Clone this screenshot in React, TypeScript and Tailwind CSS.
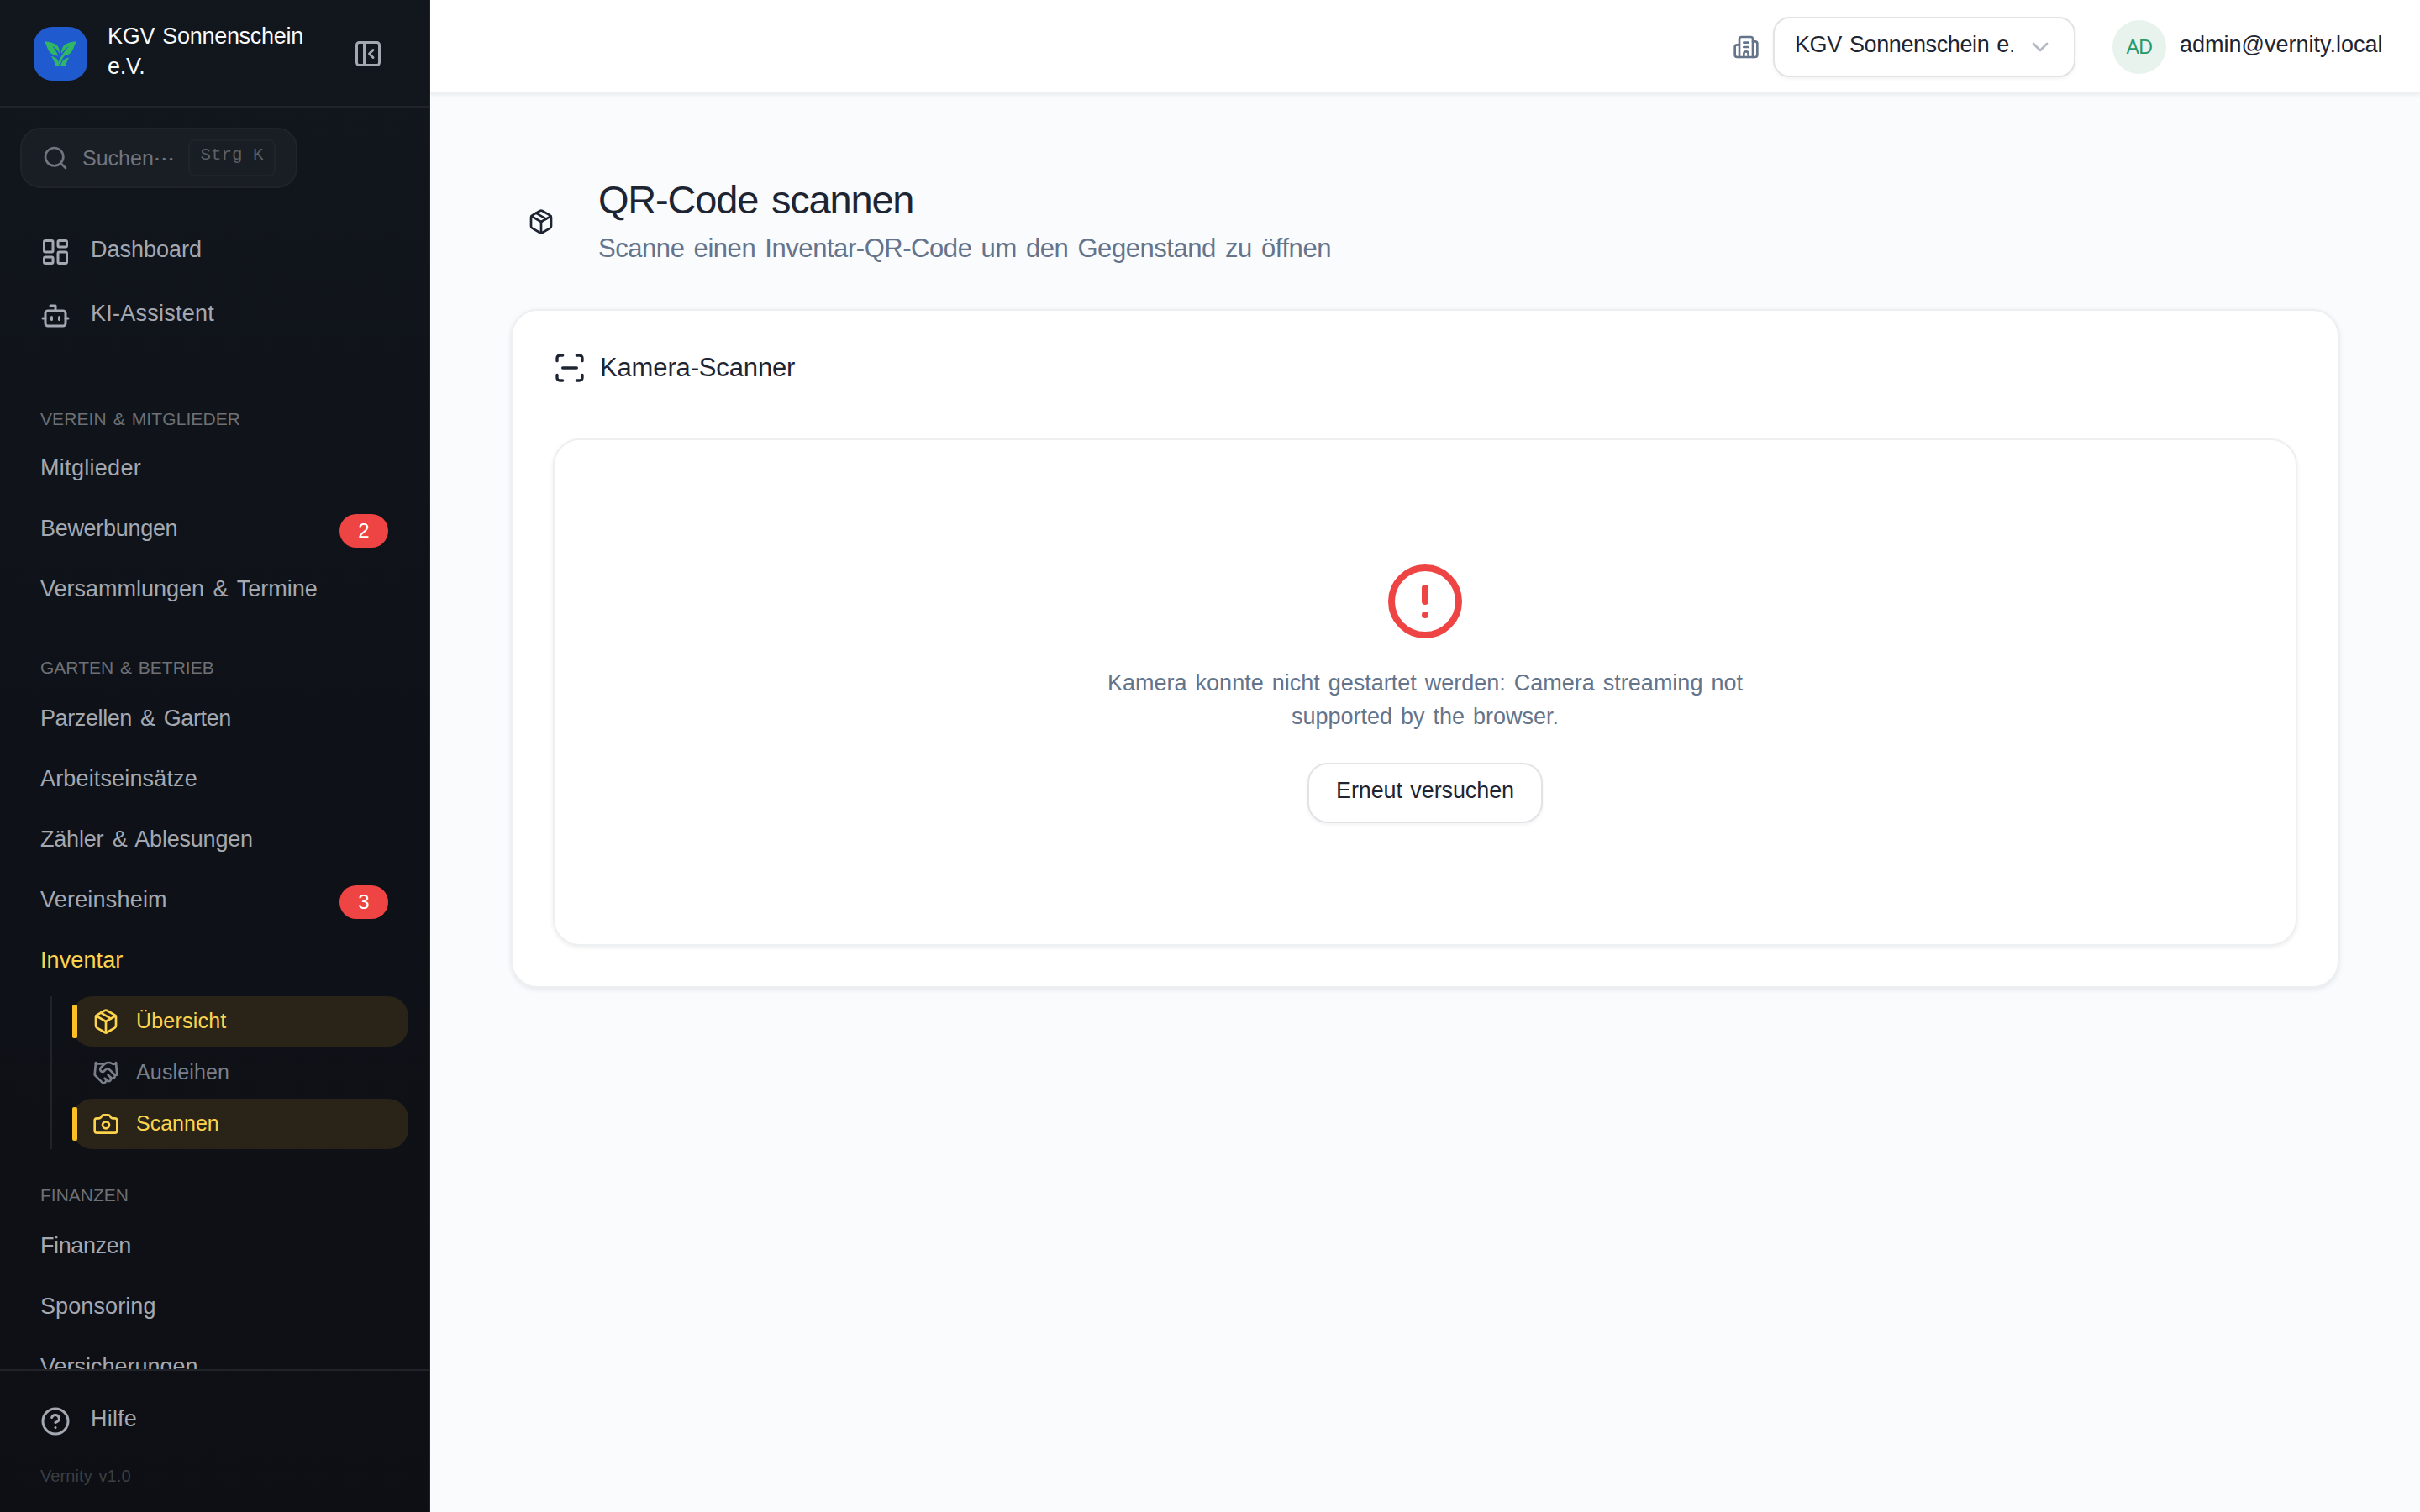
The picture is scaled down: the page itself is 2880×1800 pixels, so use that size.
import React from "react";
import {
  Bot,
  Building2,
  Camera,
  ChevronDown,
  CircleAlert,
  CircleHelp,
  Handshake,
  LayoutDashboard,
  Package,
  PanelLeftClose,
  Search,
} from "lucide-react";

type Item = { label: string; tracking?: string; badge?: string; active?: boolean };

function Logo() {
  return (
    <div className="size-16 shrink-0 rounded-[22px] bg-[#1f5bcf]">
      <svg viewBox="0 0 64 64" className="size-16" fill="#2fb765">
        <path d="M12.7 17.2C18.5 17.6 25 18.8 28.4 22.6C30.6 25.2 31 28.6 30.8 32.4C29.4 29 27 25.4 22.6 22.6C25 26.6 27.4 30.2 29.4 34.6C24.4 33.8 19.6 32 17.4 27.4C16 24.2 14.8 20.4 12.7 17.2Z" />
        <path d="M51.3 17.2C45 17.8 39.2 18.8 35.8 22.6C33.2 25.6 33 28.8 33.2 32C35.4 28.6 38 25.4 41.8 22.8C38 28 33.4 33.4 30.6 39.6L29.4 42.2L31.2 46.8C32 42.6 34 38 36.6 34.6C41 33.8 44.8 31.4 46.8 27C48.2 23.6 49.2 20.2 51.3 17.2Z" />
        <path d="M21 35C24.4 35.6 27 37 28.6 39.2C29.8 41.4 30.2 44 30.2 46.8H26.6C25.2 42.6 23.4 38.4 21 35Z" />
        <path d="M42.4 36.4C39 37 36.2 38.4 34.6 40.4C33.2 42.4 32.6 44.6 32.2 46.8H37.8C38.8 43 40.4 39.4 42.4 36.4Z" />
      </svg>
    </div>
  );
}

function NavRow({ label, tracking = "", badge, active }: Item) {
  return (
    <div className="flex h-[72px] shrink-0 items-center justify-between pr-[48px] pl-[48px]">
      <span
        className={`pb-[7px] text-[27px] leading-[36px] [word-spacing:3px] ${tracking} ${
          active ? "text-[#fcd34d]" : "text-[#a4a8b1]"
        }`}
      >
        {label}
      </span>
      {badge && (
        <span className="flex h-10 w-[58px] items-center justify-center rounded-full bg-[#ef4444] pb-px text-[24px] leading-none text-white">
          {badge}
        </span>
      )}
    </div>
  );
}

function SectionTitle({ children, className }: { children: string; className: string }) {
  return (
    <div className={`flex shrink-0 items-end pl-[48px] text-[21px] leading-[30px] text-[#6d7075] [word-spacing:2px] ${className}`}>
      {children}
    </div>
  );
}

function SubItem({
  icon: Icon,
  label,
  active,
  tracking = "",
}: {
  icon: React.ComponentType<{ className?: string; strokeWidth?: number }>;
  label: string;
  active?: boolean;
  tracking?: string;
}) {
  return (
    <div
      className={`relative flex h-[60px] items-center rounded-[24px] pl-[24px] ${
        active ? "bg-[#2a2318] text-[#fcd34d]" : "text-[#7a7f89]"
      }`}
    >
      {active && <span className="absolute top-[10px] left-0 h-10 w-1.5 rounded-[2px] bg-[#fbbf24]" />}
      <Icon className="size-8" strokeWidth={2} />
      <span className={`ml-[20px] pb-[2px] text-[25px] leading-[36px] ${tracking}`}>{label}</span>
    </div>
  );
}

const club: Item[] = [
  { label: "Mitglieder", tracking: "tracking-[0.3px]" },
  { label: "Bewerbungen", tracking: "tracking-[-0.3px]", badge: "2" },
  { label: "Versammlungen & Termine" },
];
const garden: Item[] = [
  { label: "Parzellen & Garten", tracking: "tracking-[-0.4px]" },
  { label: "Arbeitseinsätze", tracking: "tracking-[0.15px]" },
  { label: "Zähler & Ablesungen", tracking: "tracking-[-0.2px]" },
  { label: "Vereinsheim", tracking: "tracking-[0.2px]", badge: "3" },
  { label: "Inventar", tracking: "tracking-[0.1px]", active: true },
];
const finance: Item[] = [
  { label: "Finanzen", tracking: "tracking-[-0.4px]" },
  { label: "Sponsoring", tracking: "tracking-[0.1px]" },
  { label: "Versicherungen" },
];

function Sidebar() {
  return (
    <aside className="flex h-full w-[512px] shrink-0 flex-col border-r-2 border-[#212527] bg-linear-to-b from-[#12161d] via-[#0e1218] to-[#0e0f14]">
      <div className="flex h-[128px] shrink-0 items-center border-b-2 border-[#20242a] pt-[2px] pr-[54px] pl-[40px]">
        <Logo />
        <div className="ml-[24px] w-[260px] pb-[7px] text-[27px] leading-[36px] tracking-[-0.3px] text-[#f8fafc] [word-spacing:2px]">
          KGV Sonnenschein e.V.
        </div>
        <PanelLeftClose className="ml-auto size-9 text-[#a4a8b1]" strokeWidth={2} />
      </div>

      <div className="flex min-h-0 flex-1 flex-col overflow-hidden">
        <div className="mt-[24px] ml-[24px] flex h-[72px] w-[330px] shrink-0 items-center rounded-[24px] border-2 border-[#20242a] bg-[#191d24] pl-[24px]">
          <Search className="size-8 text-[#70757e]" strokeWidth={2} />
          <span className="ml-[16px] flex h-[36px] w-[112px] pb-px text-[25px] leading-[36px] text-[#70757e]">
            Suchen
            <span className="font-['Noto_Sans_CJK_JP',sans-serif] leading-[36px]">…</span>
          </span>
          <kbd className="ml-[14px] flex h-[44px] w-[104px] items-center justify-center rounded-[8px] border-2 border-[#20242a] pb-[6px] font-['Liberation_Mono',monospace] text-[20.8px] leading-none text-[#5b6068]">
            Strg K
          </kbd>
        </div>

        <div className="mt-[40px] flex shrink-0 flex-col gap-1 text-[27px] leading-[36px] text-[#a4a8b1]">
          <div className="flex h-[72px] items-center pl-[48px]">
            <LayoutDashboard className="size-9" strokeWidth={2} />
            <span className="ml-[24px] pb-[7px]">Dashboard</span>
          </div>
          <div className="flex h-[72px] items-center pl-[48px]">
            <Bot className="size-9" strokeWidth={2} />
            <span className="ml-[24px] pb-[7px] tracking-[0.25px]">KI-Assistent</span>
          </div>
        </div>

        <SectionTitle className="h-[112px] pb-[10px] tracking-[0.1px]">VEREIN &amp; MITGLIEDER</SectionTitle>
        {club.map((i) => (
          <NavRow key={i.label} {...i} />
        ))}

        <SectionTitle className="h-[82px] pb-[12px]">GARTEN &amp; BETRIEB</SectionTitle>
        {garden.map((i) => (
          <NavRow key={i.label} {...i} />
        ))}

        <div className="mt-1 mr-[24px] ml-[60px] flex shrink-0 flex-col gap-px border-l-2 border-[#20242a] pl-[24px]">
          <SubItem icon={Package} label="Übersicht" active tracking="tracking-[0.2px]" />
          <SubItem icon={Handshake} label="Ausleihen" tracking="tracking-[0.15px]" />
          <SubItem icon={Camera} label="Scannen" active />
        </div>

        <SectionTitle className="h-[82px] pb-[12px]">FINANZEN</SectionTitle>
        {finance.map((i) => (
          <NavRow key={i.label} {...i} />
        ))}
      </div>

      <div className="h-[170px] shrink-0 border-t-2 border-[#20242a] pt-[24px]">
        <div className="flex h-[72px] items-center pl-[48px] text-[27px] leading-[36px] text-[#a4a8b1]">
          <CircleHelp className="size-9" strokeWidth={2} />
          <span className="ml-[24px] pb-[7px] tracking-[0.2px]">Hilfe</span>
        </div>
        <div className="mt-[14px] pl-[48px] text-[20px] leading-[30px] tracking-[0.1px] text-[#3b3e42] [word-spacing:2px]">
          Vernity v1.0
        </div>
      </div>
    </aside>
  );
}

function TopBar() {
  return (
    <header className="flex h-[112px] shrink-0 items-center justify-end border-b-2 border-[#eff0f2] bg-white pt-[2px] pr-[44px] shadow-[0_2px_4px_rgba(15,23,42,0.05)]">
      <Building2 className="size-8 text-[#64748b]" strokeWidth={2} />
      <div className="ml-[16px] flex h-[72px] w-[360px] items-center rounded-[20px] border-2 border-[#e1e3e6] bg-white pl-[24px] shadow-[0_2px_4px_rgba(15,23,42,0.05)]">
        <span className="w-[260px] overflow-hidden pb-[7px] text-[27px] leading-[36px] tracking-[-0.4px] whitespace-nowrap text-[#1e2532] [word-spacing:2px]">
          KGV Sonnenschein e.V.
        </span>
        <ChevronDown className="ml-[16px] size-8 text-[#b3b8c2]" strokeWidth={2} />
      </div>
      <div className="ml-[44px] flex size-16 items-center justify-center rounded-full bg-[#e8f3ee] text-[23px] leading-none tracking-[-0.5px] text-[#27996a]">
        AD
      </div>
      <span className="ml-[16px] w-[242px] pb-[7px] text-[27px] leading-[36px] whitespace-nowrap text-[#1e2532]">
        admin@vernity.local
      </span>
    </header>
  );
}

export default function App() {
  return (
    <div className="flex h-[1800px] w-[2880px] overflow-hidden bg-[#fafbfd] font-['Liberation_Sans',Arial,sans-serif]">
      <Sidebar />
      <div className="flex min-w-0 flex-1 flex-col">
        <TopBar />
        <main className="flex-1 pr-[96px] pl-[96px]">
          <div className="flex h-[256px] items-center pt-[48px] pl-[20px]">
            <Package className="size-8 text-[#1e2532]" strokeWidth={2} />
            <div className="ml-[52px] pb-[2px]">
              <h1 className="text-[47px] leading-[64px] tracking-[-1.2px] text-[#1e2532] [word-spacing:4px]">
                QR-Code scannen
              </h1>
              <p className="mt-[2px] text-[31px] leading-[48px] tracking-[-0.45px] text-[#64748b] [word-spacing:3px]">
                Scanne einen Inventar-QR-Code um den Gegenstand zu öffnen
              </p>
            </div>
          </div>

          <section className="h-[808px] w-[2176px] rounded-[32px] border-2 border-[#edeff1] bg-white px-[48px] shadow-[0_2px_6px_rgba(15,23,42,0.09)]">
            <div className="flex h-[136px] items-center">
              <svg
                viewBox="0 0 24 24"
                className="size-10 text-[#1e2532]"
                fill="none"
                stroke="currentColor"
                strokeWidth="2"
                strokeLinecap="round"
                strokeLinejoin="round"
              >
                <path d="M3 7V5a2 2 0 0 1 2-2h2M17 3h2a2 2 0 0 1 2 2v2M21 17v2a2 2 0 0 1-2 2h-2M7 21H5a2 2 0 0 1-2-2v-2M7 12h10" />
              </svg>
              <h2 className="ml-[16px] pb-px text-[31px] leading-[40px] tracking-[-0.15px] text-[#1e2532]">Kamera-Scanner</h2>
            </div>
            <div className="mt-[16px] flex h-[604px] flex-col items-center rounded-[32px] border-2 border-[#edeff1] bg-white pt-[144px] shadow-[0_2px_5px_rgba(15,23,42,0.08)]">
              <CircleAlert className="size-24 text-[#ef4444]" strokeWidth={2} />
              <p className="mt-[29px] w-[768px] text-center text-[27px] leading-[40px] text-[#64748b] [word-spacing:2.5px]">
                Kamera konnte nicht gestartet werden: Camera streaming not supported by the browser.
              </p>
              <button className="mt-[35px] flex h-[72px] w-[280px] items-center justify-center rounded-[24px] border-2 border-[#e1e3e6] bg-white pb-[7px] text-[27px] leading-[36px] tracking-[-0.1px] text-[#1e2532] shadow-[0_2px_4px_rgba(15,23,42,0.05)] [word-spacing:2px]">
                Erneut versuchen
              </button>
            </div>
          </section>
        </main>
      </div>
    </div>
  );
}
